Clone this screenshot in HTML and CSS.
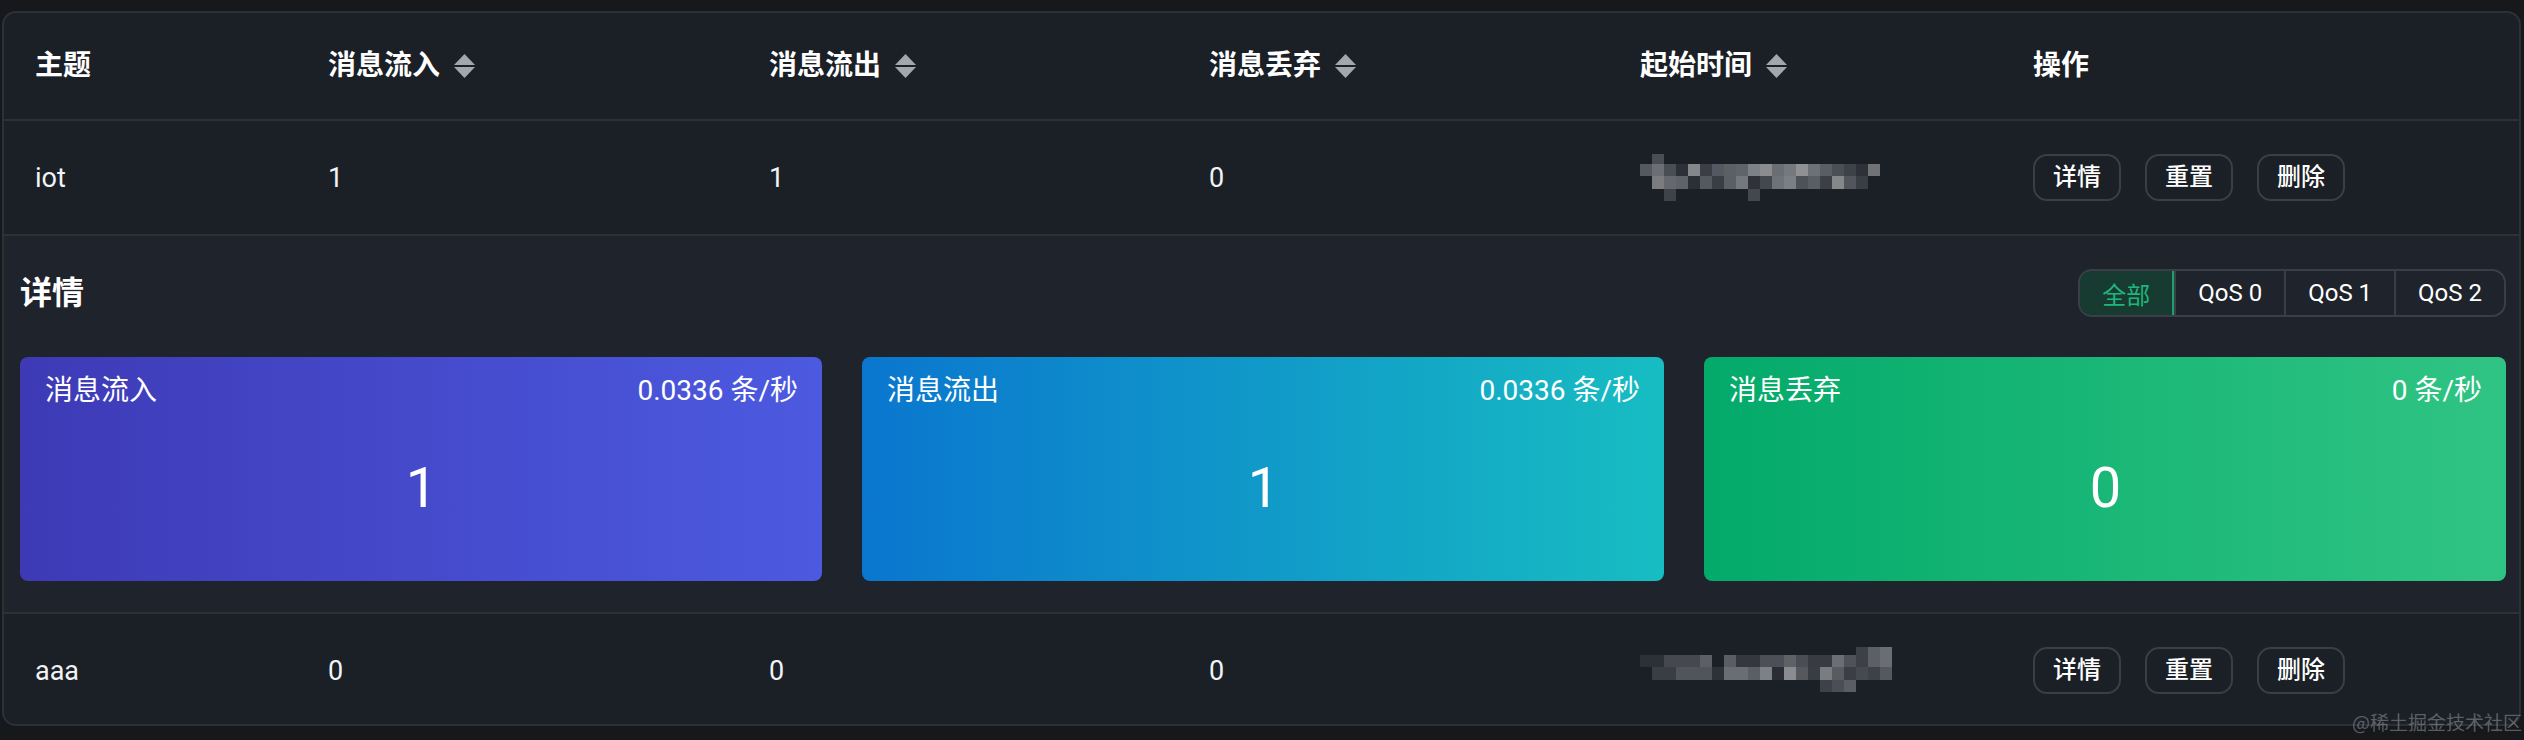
FILE: index.html
```html
<!DOCTYPE html>
<html lang="zh-CN">
<head>
<meta charset="utf-8">
<title>Topic metrics</title>
<link rel="stylesheet" href="styles.css">
</head>
<body>
<div class="table">
  <div class="row head">
    <div class="cell">主题</div>
    <div class="cell">消息流入<svg class="sort" viewBox="0 0 21 24"><path d="M10.5 0 L21 11 H0 Z"/><path d="M0 13 H21 L10.5 24 Z"/></svg></div>
    <div class="cell">消息流出<svg class="sort" viewBox="0 0 21 24"><path d="M10.5 0 L21 11 H0 Z"/><path d="M0 13 H21 L10.5 24 Z"/></svg></div>
    <div class="cell">消息丢弃<svg class="sort" viewBox="0 0 21 24"><path d="M10.5 0 L21 11 H0 Z"/><path d="M0 13 H21 L10.5 24 Z"/></svg></div>
    <div class="cell">起始时间<svg class="sort" viewBox="0 0 21 24"><path d="M10.5 0 L21 11 H0 Z"/><path d="M0 13 H21 L10.5 24 Z"/></svg></div>
    <div class="cell">操作</div>
  </div>
  <div class="row body">
    <div class="cell">iot</div>
    <div class="cell">1</div>
    <div class="cell">1</div>
    <div class="cell">0</div>
    <div class="cell">
      <svg class="mosaic" width="256" height="48" viewBox="0 0 256 48">
        <rect x="12" y="0" width="12" height="10" fill="#4a4d53"/>
        <rect x="0" y="10" width="12" height="12" fill="#55585e"/>
        <rect x="12" y="10" width="12" height="12" fill="#6b6e73"/>
        <rect x="24" y="10" width="12" height="12" fill="#4a4d52"/>
        <rect x="36" y="10" width="12" height="12" fill="#2d3037"/>
        <rect x="48" y="10" width="12" height="12" fill="#85878b"/>
        <rect x="60" y="10" width="12" height="12" fill="#3b3e44"/>
        <rect x="72" y="10" width="12" height="12" fill="#555860"/>
        <rect x="84" y="10" width="12" height="12" fill="#5c5f64"/>
        <rect x="96" y="10" width="12" height="12" fill="#606368"/>
        <rect x="108" y="10" width="12" height="12" fill="#7d8084"/>
        <rect x="120" y="10" width="12" height="12" fill="#8a8c90"/>
        <rect x="132" y="10" width="12" height="12" fill="#6a6d71"/>
        <rect x="144" y="10" width="12" height="12" fill="#75787c"/>
        <rect x="156" y="10" width="12" height="12" fill="#8f9195"/>
        <rect x="168" y="10" width="12" height="12" fill="#6d7074"/>
        <rect x="180" y="10" width="12" height="12" fill="#5a5d62"/>
        <rect x="192" y="10" width="12" height="12" fill="#4b4e54"/>
        <rect x="204" y="10" width="12" height="12" fill="#3e4147"/>
        <rect x="216" y="10" width="12" height="12" fill="#2e3138"/>
        <rect x="228" y="10" width="12" height="12" fill="#707276"/>
        <rect x="12" y="22" width="12" height="13" fill="#7a7c80"/>
        <rect x="24" y="22" width="12" height="13" fill="#65686c"/>
        <rect x="36" y="22" width="12" height="13" fill="#5f6267"/>
        <rect x="48" y="22" width="12" height="13" fill="#2c2f36"/>
        <rect x="60" y="22" width="12" height="13" fill="#55585d"/>
        <rect x="72" y="22" width="12" height="13" fill="#3a3d44"/>
        <rect x="84" y="22" width="12" height="13" fill="#5b5e63"/>
        <rect x="96" y="22" width="12" height="13" fill="#74777b"/>
        <rect x="108" y="22" width="12" height="13" fill="#2f3239"/>
        <rect x="120" y="22" width="12" height="13" fill="#44474d"/>
        <rect x="132" y="22" width="12" height="13" fill="#6f7276"/>
        <rect x="144" y="22" width="12" height="13" fill="#7b7e82"/>
        <rect x="156" y="22" width="12" height="13" fill="#4e5157"/>
        <rect x="168" y="22" width="12" height="13" fill="#5a5d62"/>
        <rect x="180" y="22" width="12" height="13" fill="#3c3f45"/>
        <rect x="192" y="22" width="12" height="13" fill="#858789"/>
        <rect x="204" y="22" width="12" height="13" fill="#52555b"/>
        <rect x="216" y="22" width="12" height="13" fill="#3a3d44"/>
        <rect x="24" y="35" width="12" height="12" fill="#3f4248"/>
        <rect x="108" y="35" width="12" height="12" fill="#44474d"/>
      </svg>
    </div>
    <div class="cell ops"><button class="btn">详情</button><button class="btn">重置</button><button class="btn">删除</button></div>
  </div>
  <div class="detail">
    <div class="detail-head">
      <h3 class="detail-title">详情</h3>
      <div class="seg">
        <span class="seg-item active">全部</span>
        <span class="seg-item">QoS 0</span>
        <span class="seg-item">QoS 1</span>
        <span class="seg-item">QoS 2</span>
      </div>
    </div>
    <div class="cards">
      <div class="card card-in">
        <div class="card-top"><span>消息流入</span><span>0.0336 条/秒</span></div>
        <div class="card-num">1</div>
      </div>
      <div class="card card-out">
        <div class="card-top"><span>消息流出</span><span>0.0336 条/秒</span></div>
        <div class="card-num">1</div>
      </div>
      <div class="card card-drop">
        <div class="card-top"><span>消息丢弃</span><span>0 条/秒</span></div>
        <div class="card-num">0</div>
      </div>
    </div>
  </div>
  <div class="row body last">
    <div class="cell">aaa</div>
    <div class="cell">0</div>
    <div class="cell">0</div>
    <div class="cell">0</div>
    <div class="cell">
      <svg class="mosaic" width="264" height="48" viewBox="0 0 264 48">
        <rect x="0" y="8" width="24" height="12" fill="#2c3038"/>
        <rect x="24" y="8" width="36" height="12" fill="#45484e"/>
        <rect x="60" y="8" width="12" height="12" fill="#5c5f64"/>
        <rect x="84" y="8" width="12" height="12" fill="#5a5d62"/>
        <rect x="96" y="8" width="24" height="12" fill="#34373e"/>
        <rect x="120" y="8" width="24" height="12" fill="#4c4f55"/>
        <rect x="144" y="8" width="12" height="12" fill="#5e6166"/>
        <rect x="156" y="8" width="12" height="12" fill="#4a4d53"/>
        <rect x="168" y="8" width="24" height="12" fill="#383b42"/>
        <rect x="192" y="8" width="12" height="12" fill="#6b6e72"/>
        <rect x="204" y="8" width="12" height="12" fill="#4f5258"/>
        <rect x="216" y="0" width="12" height="20" fill="#3d4047"/>
        <rect x="228" y="0" width="12" height="20" fill="#5c5f64"/>
        <rect x="240" y="0" width="12" height="20" fill="#6a6d71"/>
        <rect x="12" y="20" width="24" height="13" fill="#3a3d44"/>
        <rect x="36" y="20" width="36" height="13" fill="#51545a"/>
        <rect x="72" y="20" width="12" height="13" fill="#2e3138"/>
        <rect x="84" y="20" width="24" height="13" fill="#6a6d71"/>
        <rect x="108" y="20" width="12" height="13" fill="#5b5e63"/>
        <rect x="120" y="20" width="12" height="13" fill="#7d8084"/>
        <rect x="132" y="20" width="12" height="13" fill="#2a2d33"/>
        <rect x="144" y="20" width="12" height="13" fill="#8a8c90"/>
        <rect x="156" y="20" width="12" height="13" fill="#55585d"/>
        <rect x="168" y="20" width="12" height="13" fill="#393c43"/>
        <rect x="180" y="20" width="12" height="13" fill="#7a7c80"/>
        <rect x="192" y="20" width="12" height="13" fill="#585b60"/>
        <rect x="204" y="20" width="12" height="13" fill="#3b3e45"/>
        <rect x="216" y="20" width="12" height="13" fill="#464950"/>
        <rect x="228" y="20" width="12" height="13" fill="#3e4147"/>
        <rect x="240" y="20" width="12" height="13" fill="#55585e"/>
        <rect x="180" y="33" width="12" height="12" fill="#3e4148"/>
        <rect x="192" y="33" width="12" height="12" fill="#4b4e54"/>
        <rect x="204" y="33" width="12" height="12" fill="#5a5d62"/>
      </svg>
    </div>
    <div class="cell ops"><button class="btn">详情</button><button class="btn">重置</button><button class="btn">删除</button></div>
  </div>
</div>
<div class="watermark">@稀土掘金技术社区</div>
</body>
</html>
```
FILE: styles.css
```css
* { box-sizing: border-box; }

html, body {
  margin: 0;
  padding: 0;
  background: #16181b;
}

body {
  width: 2524px;
  height: 740px;
  padding: 11px 3px 0 2px;
  position: relative;
  overflow: hidden;
  font-family: Roboto, "Noto Sans CJK SC", sans-serif;
  color: #f2f3f5;
}

.table {
  border: 2px solid #2c3038;
  border-radius: 14px;
  background: #1b1f26;
  overflow: hidden;
}

.row {
  display: grid;
  grid-template-columns: 293px 441px 440px 431px 393px 1fr;
  align-items: center;
  border-bottom: 2px solid #2c3038;
}

.row.head {
  height: 108px;
  font-weight: 700;
  font-size: 28px;
  color: #ffffff;
}

.row.body {
  height: 115px;
  font-size: 27px;
}

.row.last {
  height: 110px;
  border-bottom: none;
  padding-top: 3px;
}

.cell {
  padding-left: 31px;
  display: flex;
  align-items: center;
  line-height: 40px;
}

.sort {
  width: 21px;
  height: 24px;
  margin-left: 14px;
  fill: #a3a6ad;
}

.mosaic {
  display: block;
}

.ops {
  gap: 24px;
}

.btn {
  height: 47px;
  padding: 0 18px;
  border: 2px solid #3a3f47;
  border-radius: 14px;
  background: transparent;
  color: #ffffff;
  font-family: Roboto, "Noto Sans CJK SC", sans-serif;
  font-size: 24px;
  font-weight: 500;
  line-height: 43px;
}

.detail {
  height: 378px;
  padding: 33px 13px 31px 16px;
  background: #1f232b;
  border-bottom: 2px solid #2c3038;
}

.detail-head {
  height: 48px;
  display: flex;
  align-items: center;
  justify-content: space-between;
}

.detail-title {
  margin: 0;
  font-size: 32px;
  font-weight: 700;
  color: #ffffff;
  line-height: 48px;
}

.seg {
  display: flex;
  height: 48px;
  border: 2px solid #3a3f47;
  border-radius: 14px;
  overflow: hidden;
}

.seg-item {
  display: flex;
  align-items: center;
  justify-content: center;
  padding: 0 22px;
  font-size: 24px;
  color: #ffffff;
  border-left: 2px solid #3a3f47;
}

.seg-item:first-child {
  border-left: none;
}

.seg-item.active {
  width: 94px;
  padding: 0;
  color: #1fb57c;
  background: #173a31;
  box-shadow: inset 0 0 0 2px #1c9e6d;
  border-radius: 12px 0 0 12px;
  margin: -2px 0 -2px -2px;
  width: 96px;
}

.cards {
  margin-top: 40px;
  height: 224px;
  display: grid;
  grid-template-columns: 1fr 1fr 1fr;
  gap: 40px;
}

.card {
  border-radius: 8px;
  padding: 14px 24px 16px 25px;
  display: flex;
  flex-direction: column;
  color: #ffffff;
}

.card-in { background: linear-gradient(90deg, #3e3ab6 0%, #4c5ae0 100%); }
.card-out { background: linear-gradient(90deg, #0a76cf 0%, #17bdc2 100%); }
.card-drop { background: linear-gradient(90deg, #03aa6a 0%, #30c484 100%); }

.card-top {
  display: flex;
  justify-content: space-between;
  font-size: 28px;
  line-height: 40px;
}

.card-num {
  flex: 1;
  display: flex;
  align-items: center;
  justify-content: center;
  font-size: 56px;
  line-height: 1;
}

.watermark {
  position: absolute;
  right: 2px;
  top: 708px;
  font-family: "Noto Sans CJK SC", sans-serif;
  font-size: 19px;
  color: rgba(150, 152, 156, 0.55);
  white-space: nowrap;
}
```
